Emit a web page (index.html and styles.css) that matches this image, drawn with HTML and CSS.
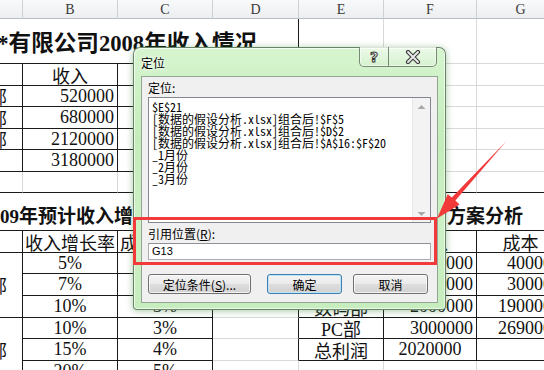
FILE: index.html
```html
<!DOCTYPE html>
<html lang="zh-CN">
<head>
<meta charset="utf-8">
<title>定位</title>
<link rel="stylesheet" href="styles.css">
</head>
<body>
<div class="sheet">
  <!-- column headers -->
  <div class="c h"></div><div class="c h">B</div><div class="c h">C</div><div class="c h">D</div><div class="c h">E</div><div class="c h">F</div><div class="c h">G</div>
  <!-- r1 -->
  <div class="c s4 bk-r bk-b"><span class="t1">**有限公司2008年收入情况</span></div><div class="c"></div><div class="c"></div><div class="c"></div>
  <!-- r2 -->
  <div class="c bk-r bk-b"></div><div class="c ctr bk-r bk-b">收入</div><div class="c bk-r bk-b"></div><div class="c bk-r bk-b"></div><div class="c"></div><div class="c"></div><div class="c"></div>
  <!-- r3 -->
  <div class="c pa bk-r bk-b"><span>部</span></div><div class="c rt bk-r bk-b">520000</div><div class="c bk-r bk-b"></div><div class="c bk-r bk-b"></div><div class="c"></div><div class="c"></div><div class="c"></div>
  <!-- r4 -->
  <div class="c pa bk-r bk-b"><span>部</span></div><div class="c rt bk-r bk-b">680000</div><div class="c bk-r bk-b"></div><div class="c bk-r bk-b"></div><div class="c"></div><div class="c"></div><div class="c"></div>
  <!-- r5 -->
  <div class="c pa bk-r bk-b"><span>部</span></div><div class="c rt bk-r bk-b">2120000</div><div class="c bk-r bk-b"></div><div class="c bk-r bk-b"></div><div class="c"></div><div class="c"></div><div class="c"></div>
  <!-- r6 -->
  <div class="c bk-r bk-b"></div><div class="c rt bk-r bk-b">3180000</div><div class="c bk-r bk-b"></div><div class="c bk-r bk-b"></div><div class="c"></div><div class="c"></div><div class="c"></div>
  <!-- r7 -->
  <div class="c bk-b"></div><div class="c bk-b"></div><div class="c bk-b"></div><div class="c bk-b"></div><div class="c bk-b"></div><div class="c bk-b"></div><div class="c bk-b"></div>
  <!-- r8 -->
  <div class="c s4 tt bk-r bk-b"><span class="t2">2009年预计收入增长情况</span></div><div class="c s3 tt bk-b"><span class="t3">投资方案分析</span></div>
  <!-- r9 -->
  <div class="c bk-r bk-b"></div><div class="c ctr bk-r bk-b">收入增长率</div><div class="c ctr bk-r bk-b">成本增长率</div><div class="c bk-r"></div><div class="c ctr bk-r bk-b"></div><div class="c ctr bk-r bk-b">收入</div><div class="c ctr bk-r bk-b">成本</div>
  <!-- r10 -->
  <div class="c r3 pa bk-r bk-b"><span>部</span></div><div class="c ctr bk-r bk-b">5%</div><div class="c ctr bk-r bk-b"></div><div class="c bk-r"></div><div class="c ctr bk-r bk-b"></div><div class="c rt bk-r bk-b">1200000</div><div class="c rt bk-r bk-b">400000</div>
  <!-- r11 -->
  <div class="c ctr bk-r bk-b">7%</div><div class="c ctr bk-r bk-b"></div><div class="c bk-r"></div><div class="c ctr bk-r bk-b"></div><div class="c rt bk-r bk-b">1000000</div><div class="c rt bk-r bk-b">300000</div>
  <!-- r12 -->
  <div class="c ctr bk-r bk-b">10%</div><div class="c ctr bk-r bk-b">3%</div><div class="c bk-r"></div><div class="c ctr bk-r bk-b">数码部</div><div class="c rt bk-r bk-b">2000000</div><div class="c rt bk-r bk-b">1900000</div>
  <!-- r13 -->
  <div class="c r3 pa bk-r bk-b"><span>部</span></div><div class="c ctr bk-r bk-b">10%</div><div class="c ctr bk-r bk-b">3%</div><div class="c bk-r"></div><div class="c ctr bk-r bk-b">PC部</div><div class="c rt bk-r bk-b">3000000</div><div class="c rt bk-r bk-b">2690000</div>
  <!-- r14 -->
  <div class="c ctr bk-r bk-b">15%</div><div class="c ctr bk-r bk-b">4%</div><div class="c bk-r"></div><div class="c ctr bk-r bk-b">总利润</div><div class="c ctr bk-r bk-b">2020000</div><div class="c bk-r bk-b"></div>
  <!-- r15 -->
  <div class="c ctr bk-r bk-b">20%</div><div class="c ctr bk-r bk-b">5%</div><div class="c"></div><div class="c"></div><div class="c"></div><div class="c"></div>
</div>

<div class="dlg">
  <div class="cap">
    <span class="cap-title">定位</span>
    <div class="cap-btns">
      <span class="cb cb-help">?</span>
      <span class="cb cb-close"><svg width="20" height="14" viewBox="0 0 20 14"><path d="M5 2 L15 12 M15 2 L5 12" stroke="#3a3a3a" stroke-width="4.2" stroke-linecap="round" fill="none"/><path d="M5 2 L15 12 M15 2 L5 12" stroke="#e8e8e8" stroke-width="2" stroke-linecap="round" fill="none"/></svg></span>
    </div>
  </div>
  <div class="client">
    <div class="lbl">定位:</div>
    <div class="list">
      <div class="items">
        <div>$E$21</div>
        <div>[数据的假设分析.xlsx]组合后!$F$5</div>
        <div>[数据的假设分析.xlsx]组合后!$D$2</div>
        <div>[数据的假设分析.xlsx]组合后!$A$16:$F$20</div>
        <div>_1月份</div>
        <div>_2月份</div>
        <div>_3月份</div>
      </div>
      <div class="sb">
        <svg class="arr" width="9" height="6" viewBox="0 0 9 6"><path d="M0.5 5 L4.5 1 L8.5 5 Z" fill="#a8a8a8"/></svg>
        <svg class="arr" width="9" height="6" viewBox="0 0 9 6"><path d="M0.5 1 L4.5 5 L8.5 1 Z" fill="#a8a8a8"/></svg>
      </div>
    </div>
    <div class="lbl lbl2">引用位置(<u>R</u>):</div>
    <div class="inp">G13</div>
    <div class="btns">
      <span class="btn b1">定位条件(<u>S</u>)...</span>
      <span class="btn b2 def">确定</span>
      <span class="btn b3">取消</span>
    </div>
  </div>
</div>

<div class="redbox"></div>
<svg class="arrow" width="544" height="370" viewBox="0 0 544 370">
  <polygon points="506.5,141 455.4,200.6 459.6,204.6 437,218.5 447.7,194.3 451.8,197.6" fill="#f23a3a"/>
</svg>
</body>
</html>
```

FILE: styles.css
```css
body {
  margin: 0;
  width: 544px;
  height: 370px;
  overflow: hidden;
  position: relative;
  background: #fff;
  font-family: "Liberation Serif", "Noto Sans CJK SC", serif;
}

.sheet {
  display: grid;
  grid-template-columns: 23px 95px 95px 86px 85px 93px 88px;
  grid-template-rows: 19px 45px 22px 21px 22px 21px 22px 21px 38px 22px 21px 22px 22px 21px 22px 22px;
  width: 565px;
}

.c {
  box-sizing: border-box;
  border-right: 1px solid #d9d9d9;
  border-bottom: 1px solid #d9d9d9;
  display: flex;
  align-items: center;
  white-space: nowrap;
  font-size: 18px;
  color: #111;
  padding: 0 3px;
  min-width: 0;
}

.h {
  background: linear-gradient(#f8f9fa, #eceef0);
  border-right-color: #cfd2d5;
  border-bottom-color: #b9bcc0;
  justify-content: center;
  font-size: 14px;
  color: #3a3a3a;
  padding-top: 1px;
}

.ctr { justify-content: center; }
.rt { justify-content: flex-end; }
.bk-r { border-right-color: #1a1a1a; }
.bk-b { border-bottom-color: #1a1a1a; }
.s4 { grid-column: span 4; }
.s3 { grid-column: span 3; }
.r3 { grid-row: span 3; }

.pa { padding: 0; }
.pa span { margin-left: -11px; }

.t1 {
  margin-left: -17px;
  font-size: 22.6px;
  font-weight: bold;
}

.tt {
  padding: 6px 0 0 0;
  font-weight: bold;
  font-size: 19px;
}
.t2 { margin-left: -19px; }
.t3 { margin-left: 110px; }

/* dialog */
.dlg {
  position: absolute;
  left: 133px;
  top: 47px;
  width: 313px;
  height: 263px;
  box-sizing: border-box;
  border: 1px solid rgba(70, 95, 70, 0.75);
  border-radius: 7px 7px 4px 4px;
  padding: 0 7px 6px 7px;
  background: linear-gradient(180deg, #d6f5cf 0%, #c4ecba 35%, #cdf1c5 70%, #c6edbd 100%);
  box-shadow: inset 1px 1px 0 rgba(255,255,255,0.7), inset -1px -1px 0 rgba(255,255,255,0.6), 0 1px 7px rgba(60,130,60,0.45);
  display: flex;
  flex-direction: column;
  font-family: "Noto Sans CJK SC", "Liberation Sans", sans-serif;
}

.cap {
  height: 28px;
  position: relative;
  display: flex;
  align-items: center;
}

.cap-title {
  font-size: 12px;
  color: #000;
  text-shadow: 0 0 5px #fff, 0 0 3px #fff;
}

.cap-btns {
  position: absolute;
  top: -1px;
  right: 1px;
  height: 19px;
  display: flex;
  border: 1px solid rgba(90, 110, 90, 0.8);
  border-top: none;
  border-radius: 0 0 5px 5px;
  background: linear-gradient(rgba(255,255,255,0.55), rgba(220,240,215,0.35));
  box-shadow: inset 0 0 0 1px rgba(255,255,255,0.5);
}

.cb {
  display: flex;
  align-items: center;
  justify-content: center;
}

.cb-help {
  width: 28px;
  border-right: 1px solid rgba(90, 110, 90, 0.8);
  font-family: "DejaVu Sans", sans-serif;
  font-weight: bold;
  font-size: 14px;
  color: #e6e6e6;
  -webkit-text-stroke: 1px #3a3a3a;
}

.cb-close { width: 47px; }

.client {
  flex: 1;
  background: #f0f0f0;
  border: 1px solid #95a595;
  padding: 4px 6px 0 6px;
  display: flex;
  flex-direction: column;
}

.lbl {
  font-size: 12px;
  line-height: 14px;
  height: 14px;
  color: #000;
}

.list {
  margin-top: 2px;
  height: 126px;
  box-sizing: border-box;
  border: 1px solid #828790;
  background: #fff;
  display: flex;
}

.items {
  flex: 1;
  padding: 3px 0 0 3px;
  font-family: "Noto Sans Mono CJK SC", "Liberation Mono", "Noto Sans CJK SC", monospace;
  font-size: 12px;
  line-height: 12px;
  color: #000;
  white-space: nowrap;
  overflow: hidden;
}

.sb {
  width: 17px;
  background: #f3f3f3;
  border-left: 1px solid #e6e6e6;
  display: flex;
  flex-direction: column;
  justify-content: space-between;
  align-items: center;
  padding: 6px 0 5px 0;
}

.lbl2 { margin-top: 4px; }

.inp {
  margin-top: 2px;
  height: 17px;
  box-sizing: border-box;
  border: 1px solid #abadb3;
  border-top-color: #8e9197;
  background: #fff;
  font-family: "Liberation Sans", sans-serif;
  font-size: 11px;
  line-height: 15px;
  padding-left: 3px;
  color: #000;
}

.btns {
  margin-top: 14px;
  display: flex;
}

.btn {
  height: 20px;
  box-sizing: border-box;
  border: 1px solid #707070;
  border-radius: 3px;
  background: linear-gradient(#f3f3f3 0%, #ebebeb 48%, #dddddd 52%, #d2d2d2 100%);
  box-shadow: inset 0 0 0 1px rgba(255,255,255,0.7);
  display: flex;
  align-items: center;
  justify-content: center;
  font-size: 12px;
  color: #000;
}

.b1 { width: 103px; }
.b2 { width: 75px; margin-left: 16px; }
.b3 { width: 75px; margin-left: 11px; }

.def {
  border-color: #3c7fb1;
  box-shadow: inset 0 0 0 1px #bfe3f8;
}

/* annotations */
.redbox {
  position: absolute;
  left: 133px;
  top: 217px;
  width: 304px;
  height: 48px;
  box-sizing: border-box;
  border: 3px solid #f23a3a;
}

.arrow {
  position: absolute;
  left: 0;
  top: 0;
}
```
